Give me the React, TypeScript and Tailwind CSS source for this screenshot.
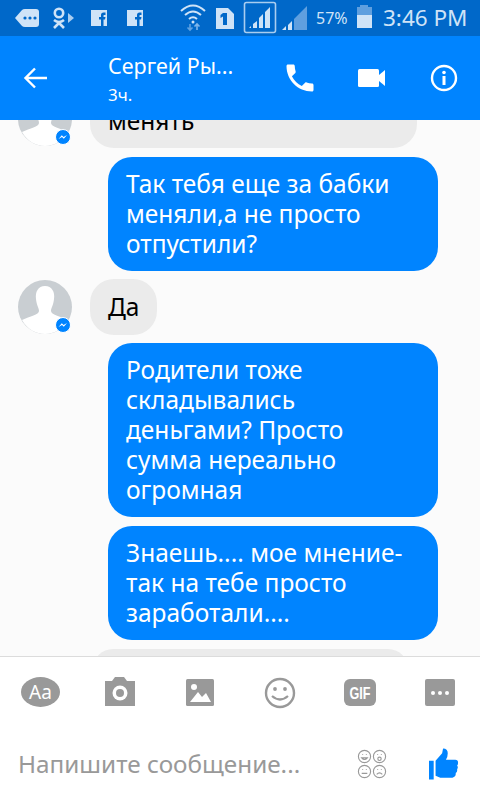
import React from 'react';

const font = { fontFamily: '"Noto Sans", sans-serif' };

/* ─── Status bar ─── */

function StatusBar() {
  const tint = '#cfe3f7';
  return (
    <div className="h-[36px] bg-[#0068c9] flex items-center relative shrink-0">
      <svg width="480" height="36" viewBox="0 0 480 36" className="absolute left-0 top-0">
        {/* message tag */}
        <path d="M15 18 L22 10 Q23 9 25 9 H36 Q39 9 39 12 V24 Q39 27 36 27 H25 Q23 27 22 26 Z" fill={tint} />
        <circle cx="25" cy="18" r="1.6" fill="#0068c9" />
        <circle cx="30" cy="18" r="1.6" fill="#0068c9" />
        <circle cx="35" cy="18" r="1.6" fill="#0068c9" />
        {/* ok.ru */}
        <circle cx="59" cy="13" r="4.2" fill="none" stroke={tint} strokeWidth="2.6" />
        <path d="M54 20 Q59 24 64 20 M59 23 L54 28 M59 23 L64 28" fill="none" stroke={tint} strokeWidth="2.6" />
        <path d="M68 13 L74 18 L68 23 Z" fill="#a9cdf0" />
        {/* facebook x2 */}
        <rect x="91" y="10" width="16" height="16" fill={tint} />
        <path d="M101 26 V19.5 H99 V17 H101 V15 Q101 12.5 103.5 12.5 H105.5 V15 H104 Q103.5 15 103.5 15.6 V17 H105.5 L105 19.5 H103.5 V26 Z" fill="#0068c9" />
        <rect x="127" y="10" width="16" height="16" fill={tint} />
        <path d="M137 26 V19.5 H135 V17 H137 V15 Q137 12.5 139.5 12.5 H141.5 V15 H140 Q139.5 15 139.5 15.6 V17 H141.5 L141 19.5 H139.5 V26 Z" fill="#0068c9" />
        {/* wifi */}
        <path d="M181 11 Q193 0 205 11 M185 15 Q193 8 201 15 M189 19 Q193 15.5 197 19" fill="none" stroke={tint} strokeWidth="2" />
        <circle cx="193" cy="22" r="1.5" fill={tint} />
        <path d="M190 30 V24 M187.5 27.5 L190 30 L192.5 27.5" fill="none" stroke="#5fa2e2" strokeWidth="1.6" />
        <path d="M197 30 V24 M194.5 26.5 L197 24 L199.5 26.5" fill="none" stroke="#7db5ea" strokeWidth="1.6" />
        {/* sim 1 */}
        <path d="M216 8 H228 L234 14 V29 H216 Z" fill={tint} />
        <path d="M223 13 H227 V25 H223 V16.5 L220.5 18 V15 Z" fill="#0068c9" />
        {/* sim 1 signal */}
        <rect x="244.5" y="2.5" width="31" height="30" rx="2" fill="none" stroke="#a9cdf0" strokeWidth="1.6" />
        <path d="M249 28 L251 26 V28 Z" fill={tint} />
        <path d="M253 28 V24 L257 21 V28 Z M259 28 V18 L263 14 V28 Z M265 28 V12 L270 7 V28 Z" fill={tint} />
        {/* sim 2 signal */}
        <path d="M282 30 L286 26 V30 Z M288 30 V25 L292 21 V30 Z" fill={tint} />
        <path d="M294 30 V19 L307 6 V30 Z" fill="#5f9fdf" />
        {/* battery */}
        <path d="M360 7 V5 H368 V7 H372 V15 H357 V7 Z" fill="#5f9fdf" />
        <rect x="357" y="15" width="15" height="13" fill={tint} />
      </svg>
      <span className="absolute left-[316px] top-[7px] text-[16px] leading-[22px] text-[#cfe3f7]">57%</span>
      <span className="absolute left-[383px] top-[3px] text-[22.5px] leading-[30px] text-[#cfe3f7]">3:46 PM</span>
    </div>
  );
}

/* ─── Header ─── */

function Header() {
  return (
    <div className="h-[84px] bg-[#0084ff] flex items-center shrink-0 text-white">
      <svg width="28" height="28" viewBox="0 0 28 28" className="ml-[22px]">
        <path d="M25 14 H4 M13 4.5 L3.5 14 L13 23.5" fill="none" stroke="white" strokeWidth="2.4" />
      </svg>
      <div className="ml-[58px] w-[150px] mt-[3px]">
        <div className="text-[21.5px] leading-[26px] whitespace-nowrap">Сергей Ры...</div>
        <div className="text-[17px] leading-[22px] mt-[5px]">3ч.</div>
      </div>
      <svg width="36" height="36" viewBox="0 0 24 24" className="ml-[24px]" fill="white">
        <path d="M6.6 10.8c1.4 2.8 3.8 5.1 6.6 6.6l2.2-2.2c.3-.3.7-.4 1-.2 1.1.4 2.3.6 3.6.6.6 0 1 .4 1 1V20c0 .6-.4 1-1 1C10.6 21 3 13.4 3 4c0-.6.4-1 1-1h3.5c.6 0 1 .4 1 1 0 1.300.2 2.500.6 3.600.1.300 0 .7-.2 1z" />
      </svg>
      <svg width="30" height="22" viewBox="0 0 30 22" className="ml-[39px]" fill="white">
        <rect x="1" y="2" width="21" height="18" rx="1.5" />
        <path d="M22 8 L28 3 V19 L22 14 Z" />
      </svg>
      <svg width="28" height="28" viewBox="0 0 28 28" className="ml-[43px]">
        <circle cx="14" cy="14" r="12" fill="none" stroke="white" strokeWidth="2.4" />
        <rect x="12.500" y="12" width="3" height="9" fill="white" />
        <circle cx="14" cy="8.500" r="1.800" fill="white" />
      </svg>
    </div>
  );
}

/* ─── Conversation ─── */

function Avatar({ className = '' }: { className?: string }) {
  return (
    <div className={`relative w-[54px] h-[54px] shrink-0 ${className}`}>
      <svg width="54" height="54" viewBox="0 0 54 54">
        <circle cx="27" cy="27" r="27" fill="#c9ced2" />
        <path d="M27 6 C34 6 37 12 36 19 C35.500 25 33 28 33 31 C33 35 42 36 50 40 C45 49 36 54 27 54 C18 54 9 49 4 40 C12 36 21 35 21 31 C21 28 18.500 25 18 19 C17 12 20 6 27 6 Z" fill="white" />
      </svg>
      <svg width="16" height="16" viewBox="0 0 16 16" className="absolute left-[37px] top-[37px]">
        <circle cx="8" cy="8" r="7.500" fill="#0084ff" stroke="white" strokeWidth="1" />
        <path d="M3.500 10 L6.800 6.300 L8.600 8 L12 6 L8.800 9.700 L7 8 Z" fill="white" />
      </svg>
    </div>
  );
}

function Blue({ children }: { children: React.ReactNode }) {
  return (
    <div className="ml-[108px] w-[330px] rounded-[24px] bg-[#0084ff] text-white text-[24.5px] leading-[30px] pl-[18px] py-[12px] whitespace-nowrap">
      {children}
    </div>
  );
}

function Messages() {
  return (
    <div className="flex-1 bg-[#fbfbfb] overflow-hidden text-[24.5px] leading-[30px]">
      <div className="flex mt-[-26px]">
        <Avatar className="ml-[18px] mt-[-2px]" />
        <div className="ml-[18px] w-[327px] rounded-[24px] bg-[#ebebeb] text-black pl-[18px] py-[12px]">менять</div>
      </div>
      <div className="mt-[9px]">
        <Blue>
          Так тебя еще за бабки
          <br />
          меняли,а не просто
          <br />
          отпустили?
        </Blue>
      </div>
      <div className="flex mt-[8px]">
        <Avatar className="ml-[18px] mt-[1px]" />
        <div className="ml-[18px] w-[67px] h-[56px] rounded-[24px] bg-[#ebebeb] text-black pl-[18px] py-[13px]">Да</div>
      </div>
      <div className="mt-[8px]">
        <Blue>
          Родители тоже
          <br />
          складывались
          <br />
          деньгами? Просто
          <br />
          сумма нереально
          <br />
          огромная
        </Blue>
      </div>
      <div className="mt-[9px]">
        <Blue>
          Знаешь.... мое мнение-
          <br />
          так на тебе просто
          <br />
          заработали....
        </Blue>
      </div>
      <div className="mt-[9px] ml-[93px] w-[315px] h-[40px] rounded-[24px] bg-[#ebebeb]" />
    </div>
  );
}

/* ─── Composer ─── */

function Composer() {
  const gray = '#999999';
  return (
    <div className="h-[144px] bg-white border-t border-[#dcdcdc] shrink-0">
      <svg width="480" height="64" viewBox="0 0 480 64" className="block">
        {/* Aa pill is text on an ellipse */}
        <ellipse cx="40.500" cy="35" rx="19.500" ry="15" fill={gray} />
        <text x="40.500" y="42" textAnchor="middle" fontSize="19" fill="white" fontFamily="Noto Sans, sans-serif">Aa</text>
        {/* camera */}
        <path d="M105 24 H112 L115 20 H124 L127 24 H135 V49 H105 Z" fill={gray} />
        <circle cx="120" cy="36" r="7.500" fill="white" />
        <circle cx="120" cy="36" r="4" fill={gray} />
        {/* image */}
        <rect x="186" y="22" width="28" height="27" rx="1.500" fill={gray} />
        <circle cx="194" cy="30" r="3" fill="white" />
        <path d="M190 45 L198 35 L202 40 L206 36 L211 45 Z" fill="white" />
        {/* smile */}
        <circle cx="280" cy="36" r="14" fill="none" stroke={gray} strokeWidth="2.400" />
        <circle cx="275" cy="32" r="1.900" fill={gray} />
        <circle cx="285" cy="32" r="1.900" fill={gray} />
        <path d="M272 39 Q280 46 288 39" fill="none" stroke={gray} strokeWidth="2.200" />
        {/* gif */}
        <rect x="344" y="22" width="32" height="27" rx="6" fill={gray} />
        <text x="360" y="42" textAnchor="middle" fontSize="17" fontWeight="700" fill="white" fontFamily="Liberation Sans, sans-serif" textLength="21" lengthAdjust="spacingAndGlyphs">GIF</text>
        {/* more */}
        <rect x="425" y="22" width="30" height="27" rx="2" fill={gray} />
        <circle cx="433" cy="36" r="2" fill="white" />
        <circle cx="440" cy="36" r="2" fill="white" />
        <circle cx="447" cy="36" r="2" fill="white" />
      </svg>
      <div className="flex items-center h-[72px] pt-[14px]">
        <span className="ml-[18px] w-[339px] text-[24.3px] leading-[32px] text-[#999999] whitespace-nowrap">Напишите сообщение...</span>
        <svg width="30" height="30" viewBox="0 0 32 32" fill="none" stroke="#999999" strokeWidth="1.200">
          <circle cx="8" cy="8" r="6.500" />
          <circle cx="24" cy="8" r="6.500" />
          <circle cx="8" cy="24" r="6.500" />
          <circle cx="24" cy="24" r="6.500" />
          <path d="M5 9.500 Q8 13 11 9.500 Z M6 5.500 V6.500 M10 5.500 V6.500 M22 5.500 V6.500 M26 5.500 V6.500 M5 26 H11 M6 21.500 V22.500 M10 21.500 V22.500 M21 27 Q24 24 27 27 M22 21.500 V22.500 M26 21.500 V22.500" />
          <circle cx="24" cy="10.500" r="1.800" />
        </svg>
        <svg width="30" height="33" viewBox="0 0 32 34" className="ml-[42px]" fill="#0084ff">
          <rect x="0" y="13" width="5" height="20" />
          <path d="M7 13 L14 5 L15 0 Q20 0 20 5 Q20 9 18 12 H28 Q31 12 31 15 Q31 17 30 18 Q31.500 20 30 22 Q30.500 25 28.500 26 Q29 30 25 31 H12 L7 29 Z" />
        </svg>
      </div>
    </div>
  );
}

export default function App() {
  return (
    <div className="w-[480px] h-[800px] flex flex-col overflow-hidden bg-white" style={font}>
      <StatusBar />
      <Header />
      <Messages />
      <Composer />
    </div>
  );
}
